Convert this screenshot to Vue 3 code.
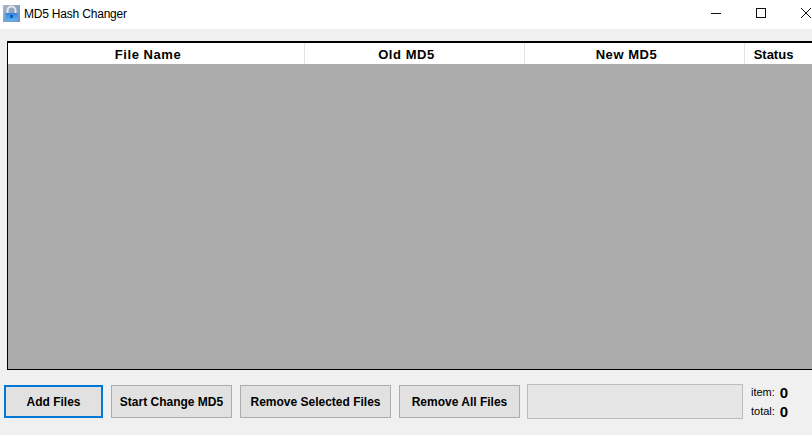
<script setup>
const columns = [
  { name: 'File Name', width: 297 },
  { name: 'Old MD5', width: 220 },
  { name: 'New MD5', width: 220 },
  { name: 'Status', width: 60, last: true }
]

const buttons = [
  { name: 'Add Files', width: 99, focused: true },
  { name: 'Start Change MD5', width: 121 },
  { name: 'Remove Selected Files', width: 151 },
  { name: 'Remove All Files', width: 121 }
]
</script>

<template>
  <div class="window">
    <div class="titlebar">
      <svg class="app-icon" width="17" height="17" viewBox="0 0 17 17">
        <defs>
          <linearGradient id="lockBg" x1="0" y1="0" x2="1" y2="1">
            <stop offset="0" stop-color="#a9b4c6" />
            <stop offset="1" stop-color="#6f8fbd" />
          </linearGradient>
          <linearGradient id="lockBody" x1="0" y1="0" x2="0" y2="1">
            <stop offset="0" stop-color="#2b83e0" />
            <stop offset="1" stop-color="#62b4f5" />
          </linearGradient>
        </defs>
        <rect width="17" height="17" fill="url(#lockBg)" />
        <path d="M4.5 8.5V5.5a4 4 0 0 1 8 0v3" fill="none" stroke="#e3e5e9" stroke-width="2" />
        <rect x="2.5" y="8" width="12" height="8" rx="1" fill="url(#lockBody)" />
        <rect x="7.5" y="10" width="2" height="3" fill="#0b3f86" />
      </svg>
      <span class="title">MD5 Hash Changer</span>
      <div class="controls">
        <svg width="12" height="12" viewBox="0 0 12 12"><path d="M1 6.5h10" stroke="#111" fill="none" /></svg>
        <svg width="12" height="12" viewBox="0 0 12 12"><rect x="1.5" y="1.5" width="9" height="9" stroke="#111" fill="none" /></svg>
        <svg width="12" height="12" viewBox="0 0 12 12"><path d="M1 1l10 10M11 1L1 11" stroke="#111" fill="none" /></svg>
      </div>
    </div>

    <div class="content">
      <div class="grid">
        <div class="grid-header">
          <div
            v-for="col in columns"
            :key="col.name"
            class="grid-col"
            :class="{ last: col.last }"
            :style="{ width: col.width + 'px' }"
          >
            {{ col.name }}
          </div>
        </div>
        <div class="grid-body"></div>
      </div>

      <div class="footer">
        <button
          v-for="btn in buttons"
          :key="btn.name"
          class="btn"
          :class="{ focused: btn.focused }"
          :style="{ width: btn.width + 'px' }"
        >
          {{ btn.name }}
        </button>
        <div class="progress"></div>
        <div class="counts">
          <div class="count-row"><span class="count-label">item:</span><span class="count-value">0</span></div>
          <div class="count-row"><span class="count-label">total:</span><span class="count-value">0</span></div>
        </div>
      </div>
    </div>
  </div>
</template>

<style>
html, body {
  margin: 0;
  overflow: hidden;
}
</style>

<style scoped>
.window {
  width: 812px;
  height: 435px;
  background: #f0f0f0;
  font-family: "Liberation Sans", Arial, sans-serif;
  color: #000;
  overflow: hidden;
}

.titlebar {
  display: flex;
  align-items: center;
  height: 29px;
  background: #fff;
  padding-left: 3px;
}

.app-icon {
  margin-top: -3px;
}

.title {
  margin-left: 4px;
  margin-top: -1px;
  font-size: 12px;
  letter-spacing: -0.2px;
}

.controls {
  display: flex;
  gap: 33px;
  margin-left: auto;
  margin-right: 0;
  margin-top: -3px;
}

.content {
  padding-top: 12px;
}

.grid {
  box-sizing: border-box;
  width: 820px;
  height: 329px;
  margin-left: 7px;
  border: 1px solid #000;
  border-top-width: 2px;
  display: flex;
  flex-direction: column;
}

.grid-header {
  display: flex;
  height: 21px;
  background: #fff;
  flex-shrink: 0;
}

.grid-col {
  box-sizing: border-box;
  padding: 2px 16px 0 0;
  border-right: 1px solid #e4e4e4;
  display: flex;
  align-items: center;
  justify-content: center;
  font-size: 13px;
  font-weight: bold;
  letter-spacing: 0.55px;
}

.grid-col.last {
  padding-right: 3px;
  border-right: none;
  letter-spacing: 0;
}

.grid-body {
  flex: 1;
  background: #ababab;
}

.footer {
  display: flex;
  align-items: center;
  gap: 8px;
  padding-left: 4px;
  margin-top: 12px;
}

.btn {
  box-sizing: border-box;
  height: 33px;
  padding: 1px 0 0;
  border: 1px solid #adadad;
  background: #e1e1e1;
  font-family: inherit;
  font-size: 12px;
  font-weight: bold;
  color: #000;
}

.btn.focused {
  border: 2px solid #0078d7;
}

.progress {
  box-sizing: border-box;
  width: 216px;
  height: 35px;
  margin-left: -1px;
  background: #e6e6e6;
  border: 1px solid #bcbcbc;
}

.counts {
  display: flex;
  flex-direction: column;
  gap: 1px;
  margin-top: 1px;
}

.count-row {
  display: flex;
  align-items: center;
  gap: 5px;
  height: 18px;
}

.count-label {
  font-size: 11px;
}

.count-value {
  font-size: 15px;
  font-weight: bold;
}
</style>
